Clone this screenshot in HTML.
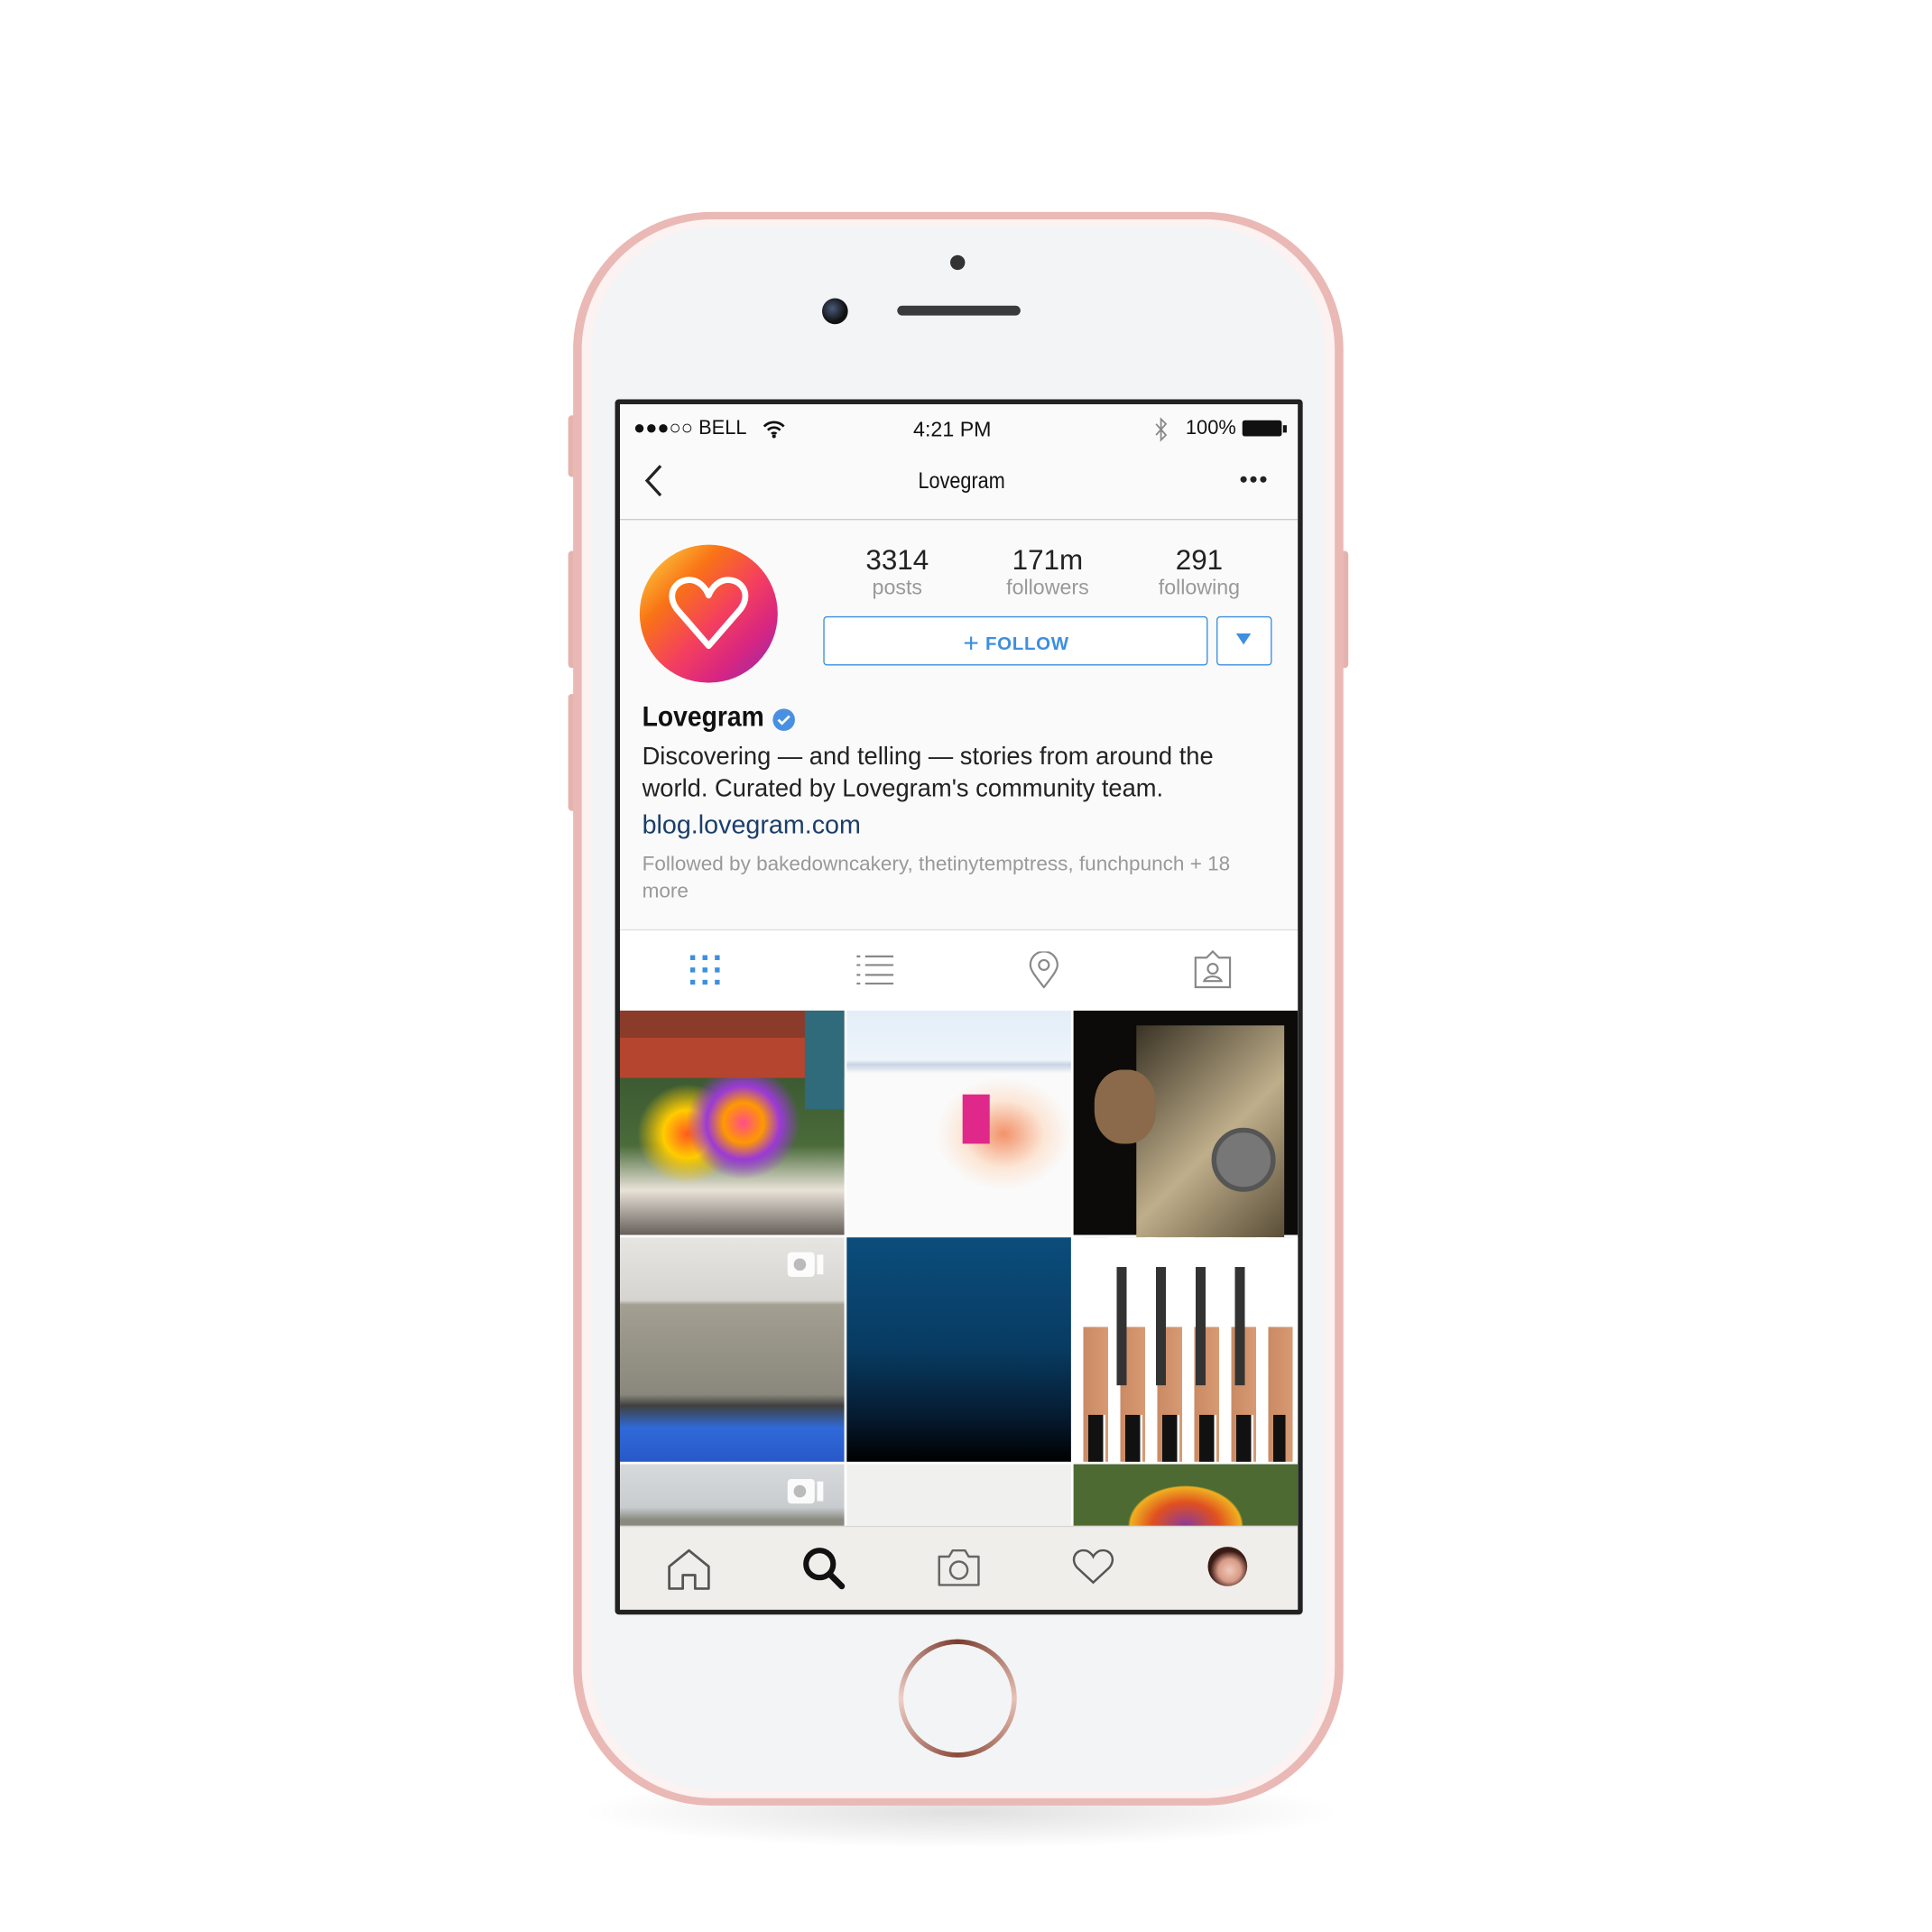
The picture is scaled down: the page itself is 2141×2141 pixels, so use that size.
<!DOCTYPE html>
<html><head><meta charset="utf-8"><style>
html,body{margin:0;padding:0;background:#fff;width:2141px;height:2141px;overflow:hidden}
#w{position:absolute;left:0;top:0;width:1552px;height:1552px;transform:scale(1.3658);transform-origin:0 0;font-family:"Liberation Sans",sans-serif}
.a{position:absolute}
.t{position:absolute;white-space:nowrap}
.tile{position:absolute;width:182px;height:182px;overflow:hidden}
</style></head><body><div id="w">
<div class="a" style="left:470px;top:1440px;width:620px;height:60px;border-radius:50%;background:radial-gradient(ellipse,rgba(0,0,0,.12),rgba(0,0,0,0) 70%)"></div>
<div class="a" style="left:461px;top:337px;width:6px;height:50px;background:#e5b3ae;border-radius:3px"></div>
<div class="a" style="left:461px;top:447px;width:6px;height:95px;background:#e5b3ae;border-radius:3px"></div>
<div class="a" style="left:461px;top:563px;width:6px;height:95px;background:#e5b3ae;border-radius:3px"></div>
<div class="a" style="left:1088px;top:447px;width:6px;height:95px;background:#e5b3ae;border-radius:3px"></div>
<div class="a" style="left:465px;top:172px;width:625px;height:1293px;border-radius:112px;background:#eab9b5"></div>
<div class="a" style="left:472px;top:178px;width:611px;height:1281px;border-radius:106px;background:#fbf2f1"></div>
<div class="a" style="left:480px;top:184px;width:595px;height:1269px;border-radius:100px;background:#f3f4f6"></div>
<div class="a" style="left:771px;top:207px;width:12px;height:12px;border-radius:50%;background:#333"></div>
<div class="a" style="left:667px;top:242px;width:21px;height:21px;border-radius:50%;background:radial-gradient(circle at 40% 40%,#4a5a7a,#111 60%)"></div>
<div class="a" style="left:728px;top:248px;width:100px;height:8px;border-radius:4px;background:#3a3a3a"></div>
<div class="a" style="left:729px;top:1330px;width:96px;height:96px;border-radius:50%;background:conic-gradient(#7a3c2e,#e7c2b6,#8a4a3a,#f0d0c8,#7a3c2e)"></div>
<div class="a" style="left:733px;top:1334px;width:88px;height:88px;border-radius:50%;background:#f3f4f6"></div>
<div class="a" style="left:499px;top:324px;width:558px;height:986px;background:#222;border-radius:3px"></div>
<div class="a" style="left:503px;top:328px;width:550px;height:978px;background:#fafafa;overflow:hidden">
 <div class="t" style="left:11px;top:11px;font-size:16px;color:#111">●●●○○ BELL</div>
 <svg class="a" style="left:116px;top:12px" width="18" height="16" viewBox="0 0 18 16"><path d="M1 6a11 11 0 0 1 16 0M4 9a7 7 0 0 1 10 0M7 12a3 3 0 0 1 4 0" stroke="#111" stroke-width="2" fill="none"/><circle cx="9" cy="14" r="1.5" fill="#111"/></svg>
 <div class="t" style="left:238px;top:11px;font-size:17px;color:#111">4:21 PM</div>
 <svg class="a" style="left:433px;top:10px" width="12" height="22"><path d="M2 6l8 9-4 4V2l4 4-8 9" stroke="#888" stroke-width="1.3" fill="none"/></svg>
 <div class="t" style="left:459px;top:11px;font-size:16px;color:#111">100%</div>
 <div class="a" style="left:505px;top:13px;width:32px;height:13px;background:#111;border-radius:2px"></div>
 <div class="a" style="left:538px;top:17px;width:3px;height:6px;background:#111"></div>
 <svg class="a" style="left:20px;top:48px" width="16" height="28"><path d="M13 2 2 14l11 12" stroke="#222" stroke-width="2.4" fill="none"/></svg>
 <div class="t" style="left:242px;top:52px;font-size:18px;color:#111;transform:scaleX(.88);transform-origin:0 0">Lovegram</div>
 <svg class="a" style="left:503px;top:58px" width="22" height="6"><circle cx="3" cy="3" r="2.6" fill="#222"/><circle cx="11" cy="3" r="2.6" fill="#222"/><circle cx="19" cy="3" r="2.6" fill="#222"/></svg>
 <div class="a" style="left:0;top:93px;width:550px;height:1px;background:#ccc"></div>
 <div class="a" style="left:16px;top:114px;width:112px;height:112px;border-radius:50%;background:linear-gradient(135deg,#fde047 0%,#f97316 30%,#f43f5e 55%,#d92680 75%,#8b2bb0 100%)"></div>
 <svg class="a" style="left:38px;top:138px" width="68" height="64" viewBox="0 0 68 64"><path d="M34 58 8 28C-2 14 10 2 22 5c6 2 10 7 12 12 2-5 6-10 12-12 12-3 24 9 14 23Z" stroke="#fff" stroke-width="5" fill="none" stroke-linejoin="round"/></svg>
 <div class="t" style="left:175px;top:113px;width:100px;text-align:center;font-size:23px;color:#222">3314</div>
 <div class="t" style="left:175px;top:139px;width:100px;text-align:center;font-size:17px;color:#999">posts</div>
 <div class="t" style="left:297px;top:113px;width:100px;text-align:center;font-size:23px;color:#222">171m</div>
 <div class="t" style="left:297px;top:139px;width:100px;text-align:center;font-size:17px;color:#999">followers</div>
 <div class="t" style="left:420px;top:113px;width:100px;text-align:center;font-size:23px;color:#222">291</div>
 <div class="t" style="left:420px;top:139px;width:100px;text-align:center;font-size:17px;color:#999">following</div>
 <div class="a" style="left:165px;top:172px;width:310px;height:38px;border:1.5px solid #3d8fe0;border-radius:3px;background:#fff"></div>
 <div class="t" style="left:165px;top:181px;width:313px;text-align:center;font-size:15px;color:#3d8fe0;font-weight:bold;letter-spacing:.5px"><span style="font-size:22px;font-weight:normal;vertical-align:-2px">+</span> FOLLOW</div>
 <div class="a" style="left:484px;top:172px;width:43px;height:38px;border:1.5px solid #3d8fe0;border-radius:3px;background:#fff"></div>
 <svg class="a" style="left:500px;top:186px" width="12" height="10"><path d="M0 0h12L6 9Z" fill="#3d8fe0"/></svg>
 <div class="t" style="left:18px;top:240px;font-size:23px;font-weight:bold;color:#111;transform:scaleX(.9);transform-origin:0 0">Lovegram</div>
 <svg class="a" style="left:122px;top:245px" width="22" height="22" viewBox="0 0 22 22"><circle cx="11" cy="11" r="9" fill="#4a90e2"/><path d="M6.5 11l3 3 6-6" stroke="#fff" stroke-width="2" fill="none"/></svg>
 <div class="t" style="left:18px;top:273px;font-size:20px;color:#222;line-height:26px">Discovering — and telling — stories from around the<br>world. Curated by Lovegram's community team.</div>
 <div class="t" style="left:18px;top:330px;font-size:21px;color:#1b3e6b">blog.lovegram.com</div>
 <div class="t" style="left:18px;top:362px;font-size:16.5px;color:#999;line-height:22px">Followed by bakedowncakery, thetinytemptress, funchpunch + 18<br>more</div>
 <div class="a" style="left:0;top:426px;width:550px;height:1px;background:#ddd"></div>
 <div class="a" style="left:0;top:427px;width:550px;height:65px;background:#fff"></div>
 <svg class="a" style="left:57px;top:447px" width="24" height="24"><g fill="#3d8fe0"><rect x="0" y="0" width="4" height="4"/><rect x="10" y="0" width="4" height="4"/><rect x="20" y="0" width="4" height="4"/><rect x="0" y="10" width="4" height="4"/><rect x="10" y="10" width="4" height="4"/><rect x="20" y="10" width="4" height="4"/><rect x="0" y="20" width="4" height="4"/><rect x="10" y="20" width="4" height="4"/><rect x="20" y="20" width="4" height="4"/></g></svg>
 <svg class="a" style="left:192px;top:447px" width="30" height="24"><g stroke="#888" stroke-width="1.6"><path d="M0 1h3M7 1h23M0 8h3M7 8h23M0 16h3M7 16h23M0 23h3M7 23h23"/></g></svg>
 <svg class="a" style="left:332px;top:444px" width="24" height="30"><path d="M12 29C5 20 1 15 1 11a11 11 0 0 1 22 0c0 4-4 9-11 18Z" stroke="#888" stroke-width="1.6" fill="none"/><circle cx="12" cy="11" r="4" stroke="#888" stroke-width="1.6" fill="none"/></svg>
 <svg class="a" style="left:466px;top:443px" width="30" height="31"><path d="M1 6h9l5-5 5 5h9v24H1Z" stroke="#888" stroke-width="1.6" fill="none"/><circle cx="15" cy="15" r="4" stroke="#888" stroke-width="1.6" fill="none"/><path d="M8 25c2-5 12-5 14 0Z" stroke="#888" stroke-width="1.6" fill="none"/></svg>
 <div class="a" style="left:0;top:492px;width:550px;height:418px;background:#fff"></div>
 <div class="tile" style="left:0;top:492px;background:linear-gradient(180deg,#8a3b2a 0 12%,#b5452e 12% 30%,transparent 30%),radial-gradient(circle at 55% 50%,#ff4d8a 0,#ff9900 12%,#9b3ad6 22%,transparent 34%),radial-gradient(circle at 30% 55%,#ff5a1f 0,#ffcc00 12%,transparent 25%),linear-gradient(180deg,#2e4a2a 0,#4a6b3a 60%,#e8e2d8 80%,#66605a 100%)"></div>
 <div class="a" style="left:150px;top:492px;width:32px;height:80px;background:#2f6b7a"></div>
 <div class="tile" style="left:184px;top:492px;background:radial-gradient(ellipse 30% 25% at 70% 55%,rgba(240,120,70,.8),rgba(255,200,160,.4) 60%,transparent),linear-gradient(180deg,#e2eef8 0,#eef4fa 22%,#c7d3e3 24%,#fafafa 28%,#fafafa 100%)"></div>
 <div class="a" style="left:278px;top:560px;width:22px;height:40px;background:#e0288a"></div>
 <div class="tile" style="left:368px;top:492px;background:#0c0b0a"></div>
 <div class="a" style="left:419px;top:504px;width:120px;height:172px;background:linear-gradient(135deg,#3a3326,#bfae8a 55%,#5a4e38)"></div>
 <div class="a" style="left:480px;top:587px;width:44px;height:44px;border-radius:50%;background:#777;border:4px solid #555"></div>
 <div class="a" style="left:385px;top:540px;width:50px;height:60px;border-radius:45%;background:#8a6a4a"></div>
 <div class="tile" style="left:0;top:676px;background:linear-gradient(180deg,#e6e5e2 0,#d6d4cf 28%,#a39f92 30%,#8a877c 70%,#404040 75%,#2f6ad8 85%,#2858c8 100%)"></div>
 <div class="tile" style="left:184px;top:676px;background:linear-gradient(180deg,#0b4d7c 0,#083b62 50%,#051b30 80%,#000 100%)"></div>
 <div class="tile" style="left:368px;top:676px;background:linear-gradient(180deg,#fff 0 40%,transparent 40%),repeating-linear-gradient(90deg,#fff 0,#fff 8px,#c98a64 8px,#d89a72 28px,#fff 28px,#fff 30px),#fff"></div>
 <div class="a" style="left:380px;top:820px;width:160px;height:38px;background:repeating-linear-gradient(90deg,#111 0 12px,#fff 12px 14px,transparent 14px 30px)"></div>
 <div class="a" style="left:395px;top:700px;width:130px;height:96px;background:repeating-linear-gradient(90deg,transparent 0 8px,#333 8px 16px,transparent 16px 32px)"></div>
 <div class="tile" style="left:0;top:860px;height:50px;background:linear-gradient(180deg,#d7dadc 0,#c8cccf 70%,#8a8a80 90%)"></div>
 <div class="tile" style="left:184px;top:860px;height:50px;background:#f0f1ef"></div>
 <div class="tile" style="left:368px;top:860px;height:50px;background:radial-gradient(ellipse 60px 42px at 50% 100%,#8a3a9a 0,#e05020 45%,#f0b020 75%,transparent 78%),#4d6a32"></div>
 <div class="a" style="left:136px;top:688px;width:22px;height:20px;background:#fff;border-radius:3px;opacity:.9"></div><div class="a" style="left:141px;top:693px;width:10px;height:10px;border-radius:50%;background:#bbb"></div><div class="a" style="left:160px;top:690px;width:5px;height:16px;background:#fff;opacity:.9"></div>
 <div class="a" style="left:136px;top:872px;width:22px;height:20px;background:#fff;border-radius:3px;opacity:.9"></div><div class="a" style="left:141px;top:877px;width:10px;height:10px;border-radius:50%;background:#bbb"></div><div class="a" style="left:160px;top:874px;width:5px;height:16px;background:#fff;opacity:.9"></div>
 <div class="a" style="left:0;top:910px;width:550px;height:68px;background:#efeeea;border-top:1px solid #d8d8d4"></div>
 <svg class="a" style="left:38px;top:928px" width="36" height="34"><path d="M2 33V15L18 2l16 13v18H23V22h-10v11Z" stroke="#555" stroke-width="2" fill="none" stroke-linejoin="round"/></svg>
 <svg class="a" style="left:147px;top:926px" width="36" height="36"><circle cx="15" cy="15" r="11" stroke="#111" stroke-width="4.5" fill="none"/><path d="M23 23l10 10" stroke="#111" stroke-width="5" stroke-linecap="round"/></svg>
 <svg class="a" style="left:256px;top:928px" width="38" height="32"><path d="M3 7h8l3-5h10l3 5h8v23H3Z" stroke="#666" stroke-width="1.8" fill="none" stroke-linejoin="round"/><circle cx="19" cy="18" r="7" stroke="#666" stroke-width="1.8" fill="none"/></svg>
 <svg class="a" style="left:367px;top:928px" width="34" height="30"><path d="M17 28 4 16C-2 9 3 1 10 2c3 0 6 3 7 5 1-2 4-5 7-5 7-1 12 7 6 14Z" stroke="#555" stroke-width="1.8" fill="none"/></svg>
 <div class="a" style="left:477px;top:927px;width:32px;height:32px;border-radius:50%;background:radial-gradient(circle at 55% 60%,#f0c8b8 0,#d89a88 35%,#3a1a14 60%)"></div>
</div>
</div></body></html>
